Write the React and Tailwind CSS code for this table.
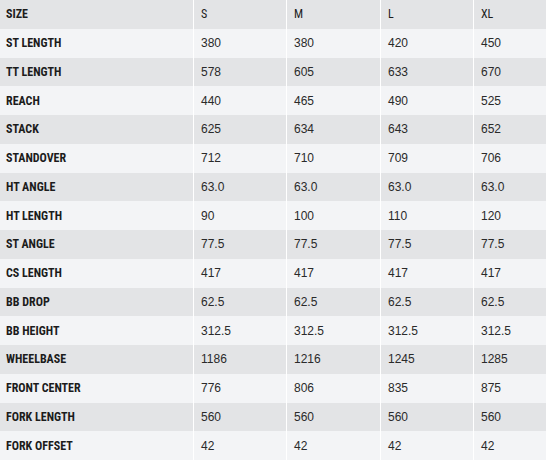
import React from "react";

const rows = [
  ["ST LENGTH", "380", "380", "420", "450"],
  ["TT LENGTH", "578", "605", "633", "670"],
  ["REACH", "440", "465", "490", "525"],
  ["STACK", "625", "634", "643", "652"],
  ["STANDOVER", "712", "710", "709", "706"],
  ["HT ANGLE", "63.0", "63.0", "63.0", "63.0"],
  ["HT LENGTH", "90", "100", "110", "120"],
  ["ST ANGLE", "77.5", "77.5", "77.5", "77.5"],
  ["CS LENGTH", "417", "417", "417", "417"],
  ["BB DROP", "62.5", "62.5", "62.5", "62.5"],
  ["BB HEIGHT", "312.5", "312.5", "312.5", "312.5"],
  ["WHEELBASE", "1186", "1216", "1245", "1285"],
  ["FRONT CENTER", "776", "806", "835", "875"],
  ["FORK LENGTH", "560", "560", "560", "560"],
  ["FORK OFFSET", "42", "42", "42", "42"],
];

const narrow = "font-['Liberation_Sans_Narrow','Arial_Narrow','Roboto_Condensed',sans-serif]";

function Row({ cells, header, shade }) {
  const bg = shade ? "bg-[#e3e4e6]" : "bg-[#f3f4f6]";
  return (
    <div className={`grid grid-cols-[193px_93px_94px_93px_1fr] h-[28.75px] ${bg}`}>
      <div className={`flex items-center pl-[6px] text-[12px] font-bold text-[#1c1c1c] ${narrow}`}>
        {cells[0]}
      </div>
      {cells.slice(1).map((c, i) => (
        <div
          key={i}
          className={`flex items-center border-l border-white pl-[7px] text-[12px] ${
            header
              ? `${narrow} text-[#1c1c1c]`
              : "font-['Liberation_Sans',Arial,sans-serif] text-[#2a2a2a]"
          }`}
        >
          {c}
        </div>
      ))}
    </div>
  );
}

export default function App() {
  return (
    <div className="w-[546px] h-[460px] overflow-hidden bg-white">
      <Row cells={["SIZE", "S", "M", "L", "XL"]} header shade />
      {rows.map((r, i) => (
        <Row key={i} cells={r} shade={i % 2 === 1} />
      ))}
    </div>
  );
}
